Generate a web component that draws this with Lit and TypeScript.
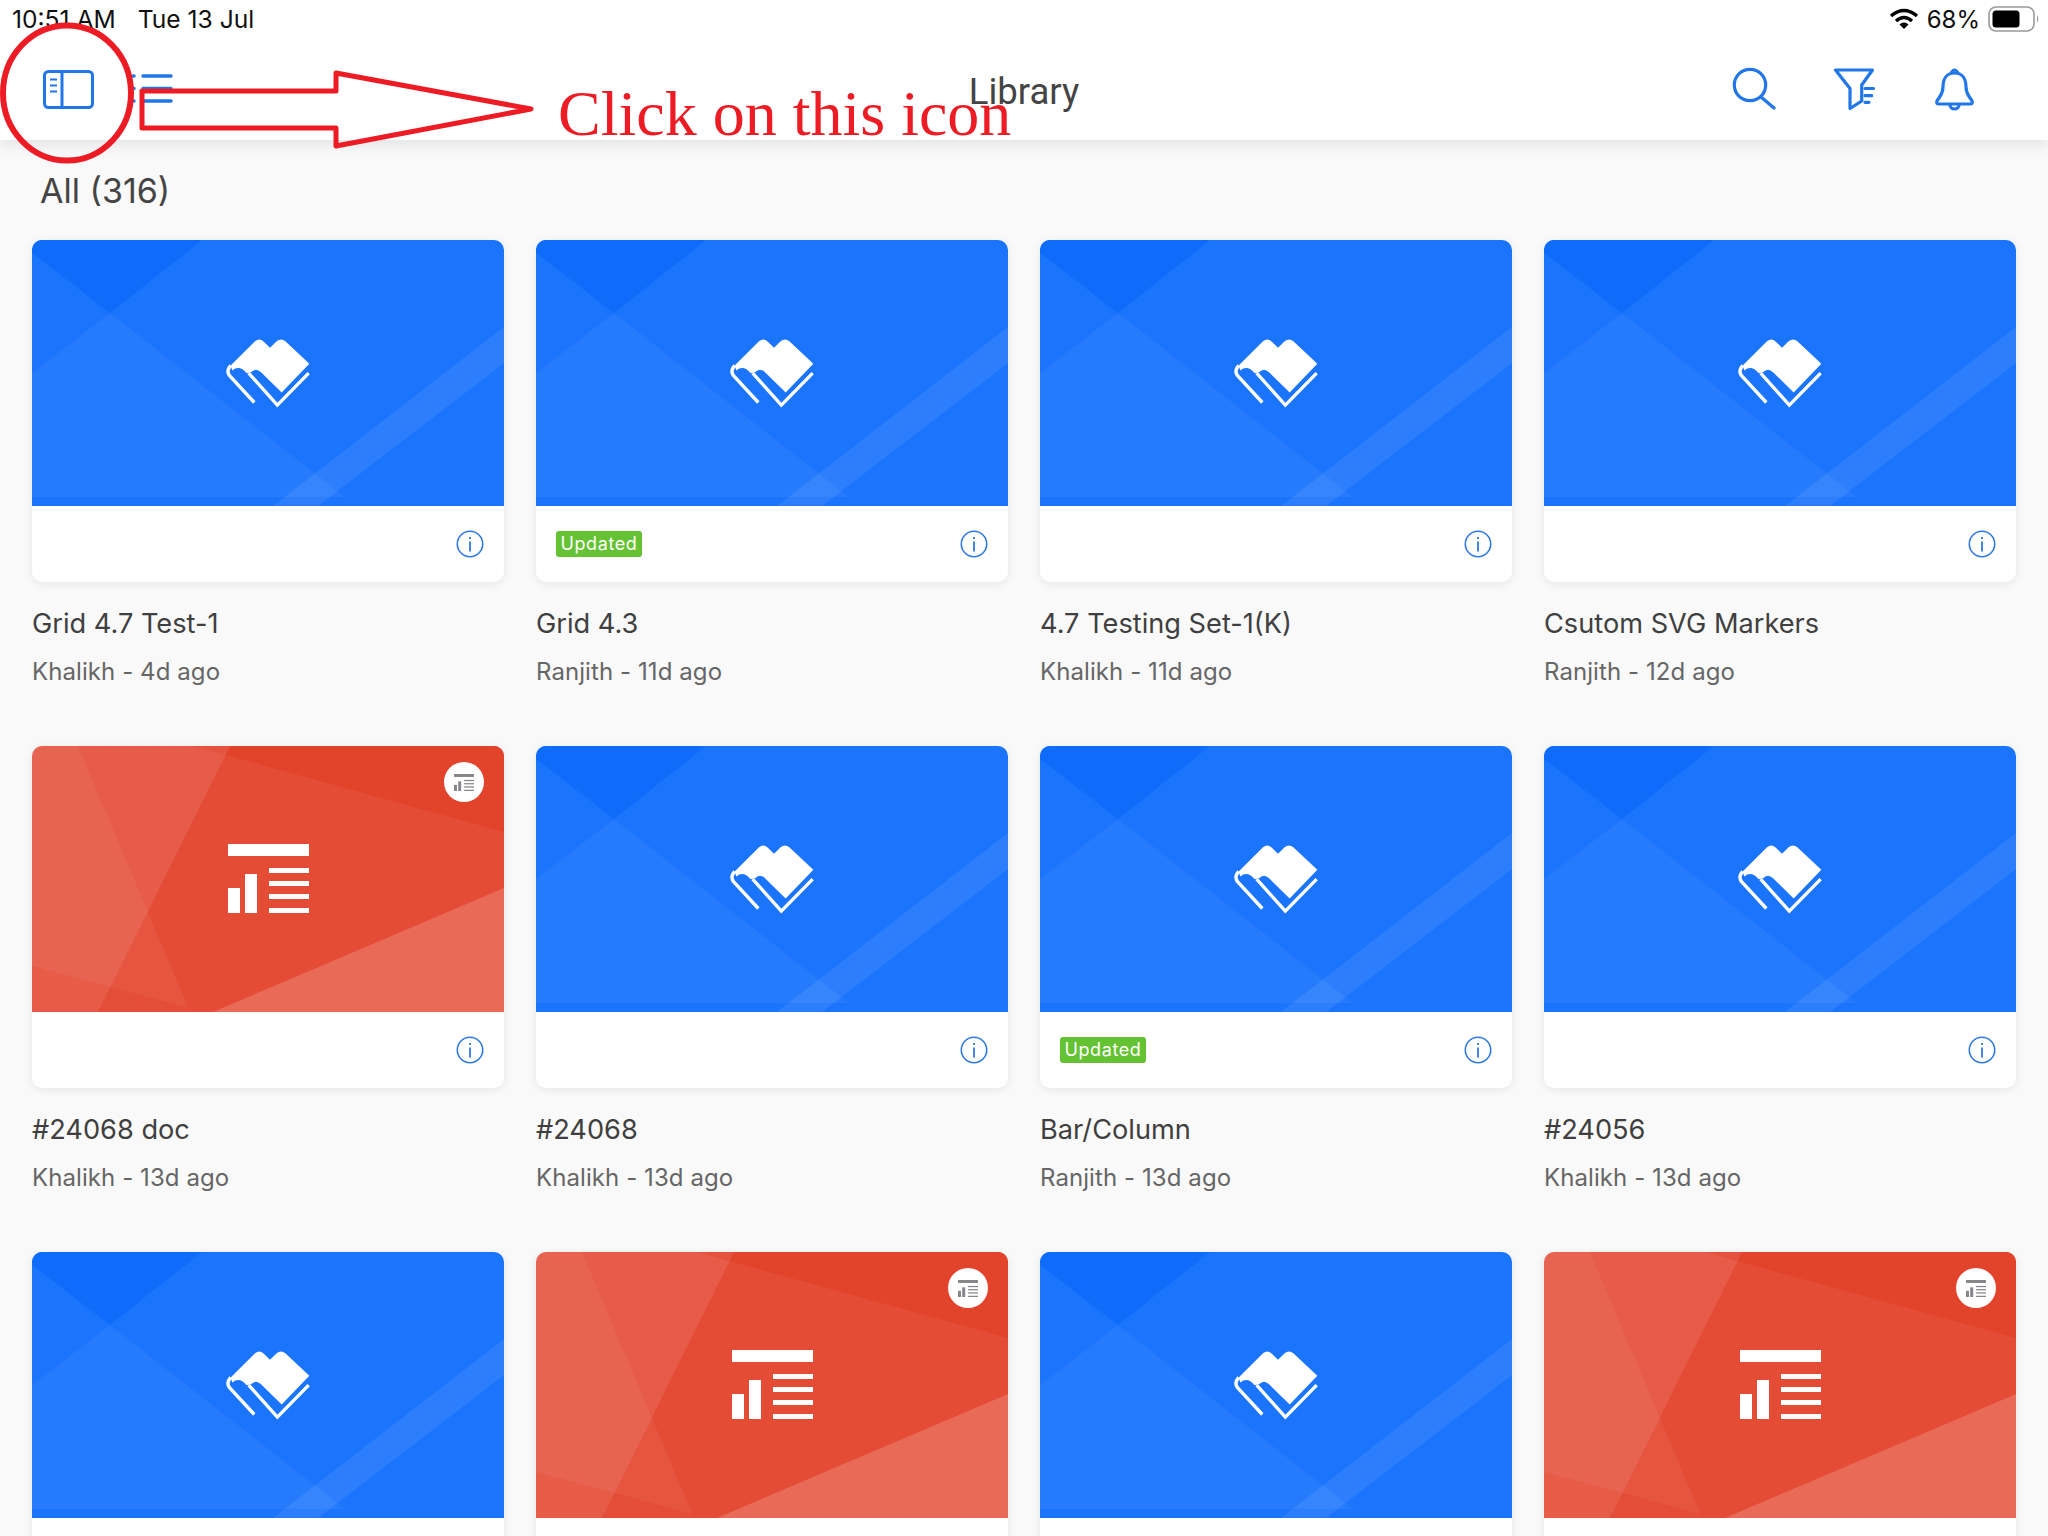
import { LitElement, css, html, svg, nothing } from "lit";
import { customElement, property } from "lit/decorators.js";

const docIcon = (color: string) => svg`
  <g fill=${color}>
    <rect x="0" y="0" width="81" height="12" />
    <rect x="0" y="44" width="12" height="25" />
    <rect x="17" y="30" width="12" height="39" />
    <rect x="41" y="24" width="40" height="5" />
    <rect x="41" y="37" width="40" height="5" />
    <rect x="41" y="50" width="40" height="5" />
    <rect x="41" y="64" width="40" height="5" />
  </g>
`;

const blueArt = svg`
  <rect width="472" height="266" fill="#1b74fc" />
  <polygon points="0,0 170,0 78,73 0,13" fill="#0f6cfb" />
  <polygon points="0,133 78,73 313,257 0,257" fill="#fff" opacity="0.05" />
  <polygon points="241,266 472,87 472,123 286,266" fill="#fff" opacity="0.08" />
`;

const redArt = svg`
  <rect width="472" height="266" fill="#e44c36" />
  <polygon points="161,0 472,86 472,0" fill="#e2432b" />
  <polygon points="0,0 198,0 66,266 0,266" fill="#fff" opacity="0.09" />
  <polygon points="0,0 46,0 158,266 0,266" fill="#fff" opacity="0.05" />
  <polygon points="0,220 79,241 66,266 0,266" fill="#e2432b" opacity="0.25" />
  <polygon points="79,241 156,262 158,266 66,266" fill="#e44c36" opacity="0.8" />
  <polygon points="181,266 472,142 472,266" fill="#fff" opacity="0.17" />
`;

@customElement("lib-card")
export class LibCard extends LitElement {
  @property() kind = "blue";
  @property() name = "";
  @property() meta = "";
  @property({ type: Boolean }) fresh = false;

  static styles = css`
    :host {
      display: block;
    }

    .card {
      height: 342px;
      border-radius: 10px;
      background-color: #fff;
      box-shadow: 0 2px 8px rgba(0, 0, 0, 0.08);
      overflow: hidden;
    }

    .thumb {
      position: relative;
      height: 266px;
      display: flex;
      align-items: center;
      justify-content: center;
    }

    .art {
      position: absolute;
      inset: 0;
      width: 100%;
      height: 100%;
    }

    .glyph {
      position: relative;
      top: -1px;
    }

    .book {
      position: relative;
      top: -1px;
      left: -1px;
    }

    .type {
      position: absolute;
      top: 16px;
      right: 20px;
      width: 40px;
      height: 40px;
      border-radius: 50%;
      background-color: #fff;
      display: flex;
      align-items: center;
      justify-content: center;
    }

    .foot {
      height: 76px;
      padding: 0 20px;
      display: flex;
      align-items: center;
      justify-content: space-between;
    }

    .tag {
      height: 26px;
      width: 86px;
      border-radius: 3px;
      background-color: #65c233;
      color: #fff;
      font-size: 18px;
      line-height: 26px;
      letter-spacing: 0.6px;
      text-align: center;
    }

    .info {
      margin-left: auto;
    }

    .name {
      margin-top: 25px;
      font-size: 27.2px;
      line-height: 34px;
      color: #3f3f3f;
    }

    .meta {
      margin-top: 16px;
      font-size: 24px;
      line-height: 30px;
      letter-spacing: 0.08px;
      color: #666;
    }
  `;

  render() {
    const isDoc = this.kind === "red";
    return html`<div class="card">
        <div class="thumb">
          <svg class="art" viewBox="0 0 472 266">${isDoc ? redArt : blueArt}</svg>
          ${isDoc
            ? html`<svg class="glyph" width="81" height="69" viewBox="0 0 81 69">${docIcon("#fff")}</svg>
                <div class="type">
                  <svg width="20" height="17" viewBox="0 0 81 69">${docIcon("#85858a")}</svg>
                </div>`
            : html`<svg class="book" width="85" height="71" viewBox="75 50 255 212">
                <path
                  fill="#fff"
                  d="M92 135 L165 62 Q178 52 190 62 L210 82 L230 62 Q243 52 256 62 L328 130 L245 216 L183 155 Q168 140 153 155 L140 158 Q118 132 97 150 Z"
                />
                <path
                  fill="none"
                  stroke="#fff"
                  stroke-width="10"
                  d="M163 246 L88 165 Q78 150 92 135 M146 158 L232 254 L326 158"
                />
              </svg>`}
        </div>
        <div class="foot">
          ${this.fresh ? html`<span class="tag">Updated</span>` : nothing}
          <svg class="info" width="28" height="28" viewBox="0 0 28 28">
            <circle cx="14" cy="14" r="12.7" fill="none" stroke="#2f7ae0" stroke-width="1.6" />
            <rect x="13.1" y="11.5" width="1.8" height="10" fill="#2f7ae0" />
            <rect x="13.1" y="7" width="1.8" height="2" fill="#2f7ae0" />
          </svg>
        </div>
      </div>
      ${this.name
        ? html`<div class="name">${this.name}</div>
            <div class="meta">${this.meta}</div>`
        : nothing}`;
  }
}

const items = [
  { kind: "blue", name: "Grid 4.7 Test-1", meta: "Khalikh - 4d ago" },
  { kind: "blue", name: "Grid 4.3", meta: "Ranjith - 11d ago", fresh: true },
  { kind: "blue", name: "4.7 Testing Set-1(K)", meta: "Khalikh - 11d ago" },
  { kind: "blue", name: "Csutom SVG Markers", meta: "Ranjith - 12d ago" },
  { kind: "red", name: "#24068 doc", meta: "Khalikh - 13d ago" },
  { kind: "blue", name: "#24068", meta: "Khalikh - 13d ago" },
  { kind: "blue", name: "Bar/Column", meta: "Ranjith - 13d ago", fresh: true },
  { kind: "blue", name: "#24056", meta: "Khalikh - 13d ago" },
  { kind: "blue", name: "", meta: "" },
  { kind: "red", name: "", meta: "" },
  { kind: "blue", name: "", meta: "" },
  { kind: "red", name: "", meta: "" },
];

@customElement("app-root")
export class AppRoot extends LitElement {
  static styles = css`
    :host {
      display: block;
      position: relative;
      width: 2048px;
      height: 1536px;
      overflow: hidden;
      background-color: #f9f9f9;
      font-family: Inter, "Noto Sans", sans-serif;
    }

    header {
      position: relative;
      height: 140px;
      background-color: #fff;
      box-shadow: 0 2px 16px rgba(0, 0, 0, 0.12);
    }

    .status {
      height: 38px;
      padding: 0 8px 0 12px;
      display: flex;
      align-items: center;
      justify-content: space-between;
      font-size: 24px;
      color: #111;
    }

    .status .left {
      display: flex;
      gap: 22px;
      font-size: 24.6px;
    }

    .status .right {
      display: flex;
      align-items: center;
      gap: 8px;
    }

    nav {
      height: 102px;
      display: grid;
      grid-template-columns: 1fr auto 1fr;
      align-items: center;
    }

    .nav-left {
      display: flex;
      align-items: center;
      gap: 36px;
      padding-left: 43px;
    }

    .nav-right {
      display: flex;
      align-items: center;
      justify-content: flex-end;
      gap: 56px;
      padding-right: 72px;
    }

    .title {
      font-family: Roboto, sans-serif;
      font-size: 36.5px;
      color: #444;
      padding-top: 4px;
    }

    main {
      padding: 30px 32px 0;
    }

    h2 {
      margin: 1px 0 29px 8px;
      font-size: 34px;
      line-height: 40px;
      font-weight: 400;
      color: #444;
    }

    .grid {
      display: grid;
      grid-template-columns: repeat(4, 472px);
      column-gap: 32px;
      row-gap: 59px;
    }

    .markup {
      position: absolute;
      left: 0;
      top: 0;
    }

    .markup text {
      font-family: "Liberation Serif", serif;
      font-size: 64px;
      fill: #ed1c24;
    }
  `;

  render() {
    return html`<header>
        <div class="status">
          <div class="left"><span>10:51 AM</span><span>Tue 13 Jul</span></div>
          <div class="right">
            <svg width="30" height="22" viewBox="0 0 30 22">
              <path fill="none" stroke="#000" stroke-width="3.4" d="M2 8 Q15 -3 28 8 M7 13 Q15 6 23 13" />
              <path fill="#000" d="M10.5 16.5 Q15 12.5 19.5 16.5 L15 21 Z" />
            </svg>
            <span>68%</span>
            <svg width="52" height="26" viewBox="0 0 52 26">
              <rect x="1" y="1" width="45" height="24" rx="7" fill="none" stroke="#999" stroke-width="1.6" />
              <rect x="4.500" y="4.500" width="27" height="17" rx="3.500" fill="#000" />
              <path fill="#999" d="M49 9 Q51.500 13 49 17 Z" />
            </svg>
          </div>
        </div>
        <nav>
          <div class="nav-left">
            <svg width="51" height="39" viewBox="0 0 51 39" fill="none" stroke="#2176e8">
              <rect x="1.500" y="1.500" width="48" height="36" rx="4" stroke-width="3" />
              <path stroke-width="3" d="M19 2 V37" />
              <path stroke-width="2" d="M7 9.500 H14 M7 15.500 H14 M7 21.500 H14" />
            </svg>
            <svg width="44" height="30" viewBox="0 0 44 30" fill="none" stroke="#2176e8" stroke-width="3.500" stroke-linecap="round">
              <path d="M13 2 H41 M13 14.500 H41 M13 27 H41" />
              <path d="M3 2 H4 M3 14.500 H4 M3 27 H4" />
            </svg>
          </div>
          <div class="title">Library</div>
          <div class="nav-right">
            <svg width="44" height="44" viewBox="0 0 44 44" fill="none" stroke="#2176e8" stroke-width="3.200" stroke-linecap="round">
              <circle cx="18" cy="18" r="15.700" />
              <path d="M29 30 L42 41" />
            </svg>
            <svg width="44" height="44" viewBox="0 0 44 44" fill="none" stroke="#2176e8" stroke-width="3.200" stroke-linecap="round" stroke-linejoin="round">
              <path d="M3.500 3 H40.500 L29.700 18 V34 L18 41.500 V21.500 Z" />
              <path d="M33 21.500 H41.500 M33 28.700 H39.700 M33 35.300 H37" />
            </svg>
            <svg width="44" height="44" viewBox="0 0 44 44" fill="none" stroke="#2176e8" stroke-width="3.200" stroke-linejoin="round">
              <path d="M22.500 6 C14 6 11 13 11 20 C11 27 8 29 5 34 C4 36 5 37 7 37 H38 C40 37 41 36 40 34 C37 29 34 27 34 20 C34 13 31 6 22.500 6 Z" />
              <path d="M19 6 Q22.500 0 26 6" />
              <path d="M18 38 A4.500 4 0 0 0 27 38" />
            </svg>
          </div>
        </nav>
      </header>
      <main>
        <h2>All (316)</h2>
        <div class="grid">
          ${items.map(
            (item) => html`<lib-card
              kind=${item.kind}
              name=${item.name}
              meta=${item.meta}
              ?fresh=${item.fresh}
            ></lib-card>`
          )}
        </div>
      </main>
      <svg class="markup" width="2048" height="200" viewBox="0 0 2048 200" fill="none">
        <ellipse cx="67" cy="93" rx="64" ry="67.500" stroke="#ed1c24" stroke-width="6" />
        <path
          stroke="#ed1c24"
          stroke-width="5"
          stroke-linejoin="round"
          d="M142 91 H336 V73 L531 109 L336 146 V128 H142 Z"
        />
        <text x="558" y="135">Click on this icon</text>
      </svg>`;
  }
}
